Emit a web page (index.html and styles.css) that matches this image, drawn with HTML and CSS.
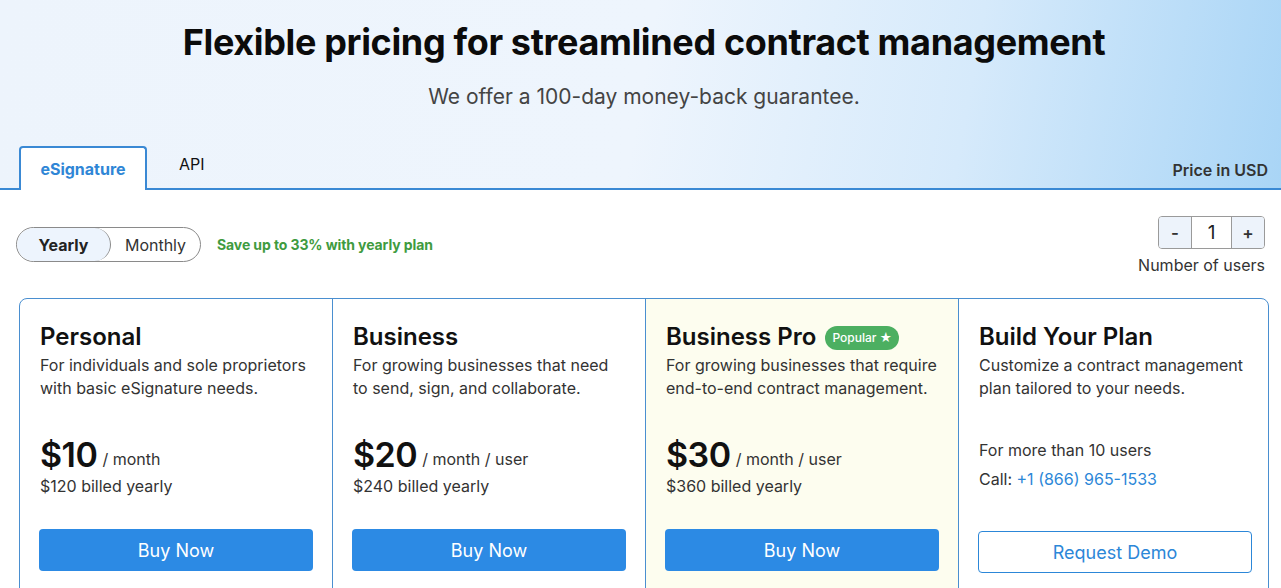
FILE: index.html
```html
<!DOCTYPE html>
<html lang="en">
<head>
<meta charset="utf-8">
<title>Pricing</title>
<link rel="stylesheet" href="styles.css">
</head>
<body>
<header class="hero">
  <h1 class="hero-title">Flexible pricing for streamlined contract management</h1>
  <p class="hero-sub">We offer a 100-day money-back guarantee.</p>
  <div class="tabbar">
    <div class="tabs">
      <div class="tab tab-active">eSignature</div>
      <div class="tab">API</div>
    </div>
    <div class="currency">Price in USD</div>
  </div>
</header>
<main class="content">
  <div class="controls">
    <div class="billing">
      <div class="toggle">
        <span class="toggle-opt toggle-on">Yearly</span>
        <span class="toggle-opt">Monthly</span>
      </div>
      <span class="save">Save up to 33% with yearly plan</span>
    </div>
    <div class="users">
      <div class="counter">
        <span class="ctr-btn">-</span>
        <span class="ctr-val">1</span>
        <span class="ctr-btn">+</span>
      </div>
      <div class="users-label">Number of users</div>
    </div>
  </div>
  <div class="plans">
    <section class="plan">
      <h2 class="plan-name">Personal</h2>
      <p class="plan-desc">For individuals and sole proprietors with basic eSignature needs.</p>
      <div class="price"><span class="amount">$10</span><span class="per">/ month</span></div>
      <div class="billed">$120 billed yearly</div>
      <button class="btn-buy">Buy Now</button>
    </section>
    <section class="plan">
      <h2 class="plan-name">Business</h2>
      <p class="plan-desc">For growing businesses that need to send, sign, and collaborate.</p>
      <div class="price"><span class="amount">$20</span><span class="per">/ month / user</span></div>
      <div class="billed">$240 billed yearly</div>
      <button class="btn-buy">Buy Now</button>
    </section>
    <section class="plan plan-pop">
      <h2 class="plan-name">Business Pro <span class="badge">Popular ★</span></h2>
      <p class="plan-desc">For growing businesses that require end-to-end contract management.</p>
      <div class="price"><span class="amount">$30</span><span class="per">/ month / user</span></div>
      <div class="billed">$360 billed yearly</div>
      <button class="btn-buy">Buy Now</button>
    </section>
    <section class="plan">
      <h2 class="plan-name">Build Your Plan</h2>
      <p class="plan-desc">Customize a contract management plan tailored to your needs.</p>
      <div class="more">For more than 10 users</div>
      <div class="call">Call: <a class="phone" href="#">+1 (866) 965-1533</a></div>
      <button class="btn-demo">Request Demo</button>
    </section>
  </div>
</main>
</body>
</html>
```

FILE: styles.css
```css
* { box-sizing: border-box; }
html, body { margin: 0; padding: 0; }
body {
  font-family: Inter, "Noto Sans", sans-serif;
  color: #222;
  background: #fff;
  width: 1281px;
  height: 588px;
  overflow: hidden;
}
.hero {
  background: linear-gradient(100deg, #edf4fc 0%, #eef5fd 50%, #d6eafb 75%, #a9d5f6 100%);
  padding-top: 19px;
}
.hero-title {
  margin: 0;
  padding-left: 7px;
  text-align: center;
  font-size: 36px;
  font-weight: 700;
  line-height: 46px;
  color: #0b0b0b;
  letter-spacing: -0.35px;
}
.hero-sub {
  margin: 20px 0 0;
  padding-left: 7px;
  text-align: center;
  font-size: 21px;
  line-height: 24px;
  color: #444;
}
.tabbar {
  margin-top: 37px;
  display: flex;
  justify-content: space-between;
  align-items: flex-end;
  border-bottom: 2px solid #3a89d4;
  padding: 0 13px 0 19px;
  height: 44px;
}
.tabs { display: flex; align-items: flex-end; height: 100%; }
.tab {
  font-size: 16px;
  color: #111;
  padding: 0 32px;
  height: 42px;
  line-height: 36px;
}
.tab-active {
  width: 128px;
  height: 44px;
  margin-bottom: -2px;
  padding: 0;
  text-align: center;
  background: #fff;
  border: 2px solid #3a89d4;
  border-bottom: none;
  border-radius: 4px 4px 0 0;
  color: #2f86d6;
  font-weight: 700;
  line-height: 42px;
}
.currency {
  font-size: 16px;
  font-weight: 600;
  color: #333;
  line-height: 32px;
  padding-bottom: 2px;
}
.content { padding: 26px 16px 0 16px; }
.controls {
  display: flex;
  justify-content: space-between;
  align-items: flex-start;
}
.billing {
  display: flex;
  align-items: center;
  gap: 16px;
  margin-top: 11px;
}
.toggle {
  display: flex;
  border: 1px solid #8a8a8a;
  border-radius: 18px;
  height: 35px;
  width: 185px;
  overflow: hidden;
}
.toggle-opt {
  display: flex;
  align-items: center;
  justify-content: center;
  font-size: 16px;
  color: #333;
  flex: 1;
}
.toggle-on {
  flex: 0 0 94px;
  background: #edf4fd;
  border-right: 1px solid #8a8a8a;
  border-radius: 18px;
  font-weight: 700;
  color: #222;
}
.save {
  font-size: 14px;
  font-weight: 700;
  color: #3f9b3f;
  letter-spacing: -0.1px;
}
.users {
  display: flex;
  flex-direction: column;
  align-items: flex-end;
}
.counter {
  display: flex;
  border: 1px solid #9a9a9a;
  border-radius: 4px;
  height: 33px;
  overflow: hidden;
}
.ctr-btn {
  width: 32px;
  background: #edf3fb;
  display: flex;
  align-items: center;
  justify-content: center;
  font-size: 17px;
  font-weight: 600;
  color: #333;
}
.ctr-val {
  width: 41px;
  border-left: 1px solid #9a9a9a;
  border-right: 1px solid #9a9a9a;
  display: flex;
  align-items: center;
  justify-content: center;
  font-size: 19px;
  color: #222;
}
.users-label {
  font-size: 16px;
  color: #333;
  margin-top: 6px;
}
.plans {
  margin: 23px 0 0 3px;
  width: 1250px;
  display: grid;
  grid-template-columns: 313px 313px 313px 1fr;
  border: 1px solid #4a8fd0;
  border-radius: 8px;
  overflow: hidden;
  height: 320px;
}
.plan {
  padding: 22px 20px 0 20px;
  border-right: 1px solid #4a8fd0;
  display: flex;
  flex-direction: column;
  align-items: flex-start;
}
.plan:last-child { border-right: none; }
.plan-pop { background: #fdfdef; }
.plan-name {
  margin: 0;
  font-size: 24px;
  font-weight: 600;
  line-height: 32px;
  color: #111;
  display: flex;
  align-items: center;
  gap: 9px;
}
.badge {
  font-size: 12px;
  font-weight: 500;
  color: #fff;
  background: #4caf61;
  border-radius: 12px;
  padding: 0 7px;
  line-height: 24px;
  height: 24px;
  margin-top: 2px;
}
.plan-desc {
  margin: 1px 0 0;
  font-size: 16px;
  line-height: 23px;
  color: #333;
}
.price {
  margin-top: 35px;
  height: 40px;
  display: flex;
  align-items: baseline;
}
.amount {
  font-size: 34px;
  font-weight: 600;
  line-height: 40px;
  color: #111;
  letter-spacing: -0.5px;
}
.per {
  font-size: 16px;
  color: #333;
  margin-left: 5px;
  position: relative;
  top: -2px;
}
.billed {
  font-size: 16px;
  line-height: 23px;
  color: #333;
}
.btn-buy {
  margin-top: 31px;
  width: 274px;
  height: 42px;
  border: none;
  border-radius: 4px;
  background: #2c8ae4;
  color: #fff;
  font-family: inherit;
  font-size: 18px;
  margin-left: -1px;
}
.more {
  margin-top: 39px;
  font-size: 16px;
  line-height: 23px;
  color: #333;
}
.call {
  margin-top: 6px;
  font-size: 16px;
  line-height: 23px;
  color: #333;
}
.phone { color: #2c87d8; text-decoration: none; }
.btn-demo {
  margin-top: 40px;
  width: 274px;
  height: 42px;
  border: 1px solid #2c87d8;
  border-radius: 4px;
  background: #fff;
  color: #2c87d8;
  font-family: inherit;
  font-size: 18px;
  margin-left: -1px;
}
```
